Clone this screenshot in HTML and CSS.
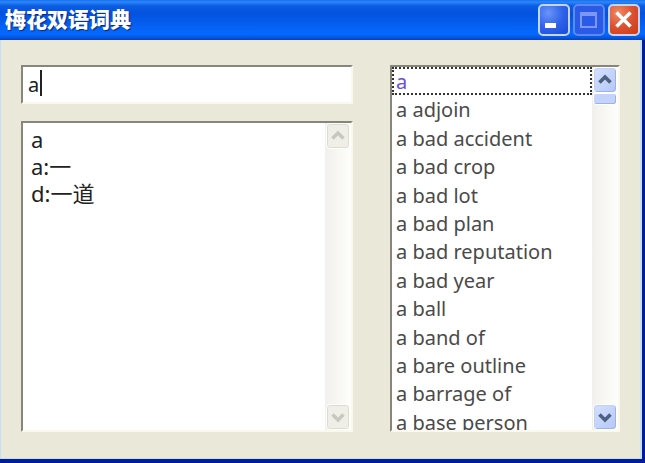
FILE: index.html
```
<!DOCTYPE html>
<html lang="zh-CN">
<head>
    <meta charset="UTF-8">
    <meta name="viewport" content="width=device-width, initial-scale=1.0">
    <title>梅花双语词典</title>
    <link rel="stylesheet" href="styles.css">
</head>
<body>
    <div class="window">
        <header class="title-bar">
            <h1>梅花双语词典</h1>
            <div class="window-buttons">
                <button type="button" class="window-btn" aria-label="Minimize">
                    <svg viewBox="0 0 28 28"><path d="M5 17h11v5H5z" fill="#fff"/></svg>
                </button>
                <button type="button" class="window-btn maximize" aria-label="Maximize" disabled>
                    <svg viewBox="0 0 28 28"><path d="M6 7h15v14H6z" fill="none" stroke="#7c98f4" stroke-width="2"/><path d="M5 6h17v4H5z" fill="#7c98f4"/></svg>
                </button>
                <button type="button" class="window-btn close" aria-label="Close">
                    <svg viewBox="0 0 28 28"><path d="M6.500 6.500l14 14M20.500 6.500l-14 14" stroke="#fff" stroke-width="3.600"/></svg>
                </button>
            </div>
        </header>
        <main class="content">
            <section class="lookup">
                <div class="field search">
                    <input type="text" id="word" value="a" aria-label="Word">
                    <span class="caret"></span>
                </div>
                <div class="field result">
                    <textarea id="meaning" aria-label="Meaning" readonly>a
a:一
d:一道</textarea>
                    <div class="scrollbar disabled">
                        <button type="button" class="scroll-btn" aria-label="Scroll up" disabled>
                            <svg viewBox="0 0 22 24"><path d="M5.500 14.500L11 9l5.500 5.500"/></svg>
                        </button>
                        <button type="button" class="scroll-btn" aria-label="Scroll down" disabled>
                            <svg viewBox="0 0 22 24"><path d="M5.500 9.500L11 15l5.500-5.500"/></svg>
                        </button>
                    </div>
                </div>
            </section>
            <div class="field words">
                <select id="wordList" size="12" aria-label="Word list">
                    <option class="current">a</option>
                    <option>a adjoin</option>
                    <option>a bad accident</option>
                    <option>a bad crop</option>
                    <option>a bad lot</option>
                    <option>a bad plan</option>
                    <option>a bad reputation</option>
                    <option>a bad year</option>
                    <option>a ball</option>
                    <option>a band of</option>
                    <option>a bare outline</option>
                    <option>a barrage of</option>
                    <option>a base person</option>
                </select>
                <div class="scrollbar">
                    <button type="button" class="scroll-btn" aria-label="Scroll up">
                        <svg viewBox="0 0 22 24"><path d="M5.500 14.500L11 9l5.500 5.500"/></svg>
                    </button>
                    <div class="thumb"></div>
                    <button type="button" class="scroll-btn" aria-label="Scroll down">
                        <svg viewBox="0 0 22 24"><path d="M5.500 9.500L11 15l5.500-5.500"/></svg>
                    </button>
                </div>
            </div>
        </main>
    </div>
</body>
</html>
```
FILE: styles.css
```
* {
    box-sizing: border-box;
}
body {
    margin: 0;
    font-family: "Noto Sans", "Noto Sans CJK SC", sans-serif;
    font-size: 20px;
    background-color: #eae8d8;
}
.window {
    display: flex;
    flex-direction: column;
    height: 100vh;
    background-color: #001c9c;
}
.title-bar {
    display: flex;
    align-items: center;
    justify-content: space-between;
    height: 40px;
    padding: 0 5px;
    background: linear-gradient(#1b70ee 0, #2a86fa 2px, #0b5be2 6px, #0353df 14px, #0562f4 27px, #0669ff 34px, #0354dc 38px, #0342bd 40px);
}
.title-bar h1 {
    margin: 0;
    padding-bottom: 4px;
    font-family: "Noto Sans CJK SC", sans-serif;
    font-size: 21px;
    font-weight: 900;
    line-height: 36px;
    color: #fff;
    text-shadow: 1px 1px 1px #06297f;
}
.window-buttons {
    display: flex;
    gap: 3px;
}
.window-btn {
    width: 32px;
    height: 32px;
    padding: 0;
    border: 2px solid #c4d5fb;
    border-radius: 5px;
    background: radial-gradient(circle at 30% 25%, #6a94f6, #2f63ea 50%, #1c48dc);
}
.window-btn svg {
    display: block;
    width: 28px;
    height: 28px;
}
.window-btn.maximize {
    border-color: #5c8af2;
    background: #2a5ae6;
}
.window-btn.close {
    background: radial-gradient(circle at 30% 25%, #f08a66, #dd5030 50%, #c93c14);
}
.content {
    flex: 1;
    display: grid;
    grid-template-columns: 332fr 230fr;
    gap: 37px;
    min-height: 0;
    margin: 0 3px 4px 0;
    padding: 25px 20px 26px;
    border: solid #c4e0f8;
    border-width: 0 2px 1px 1px;
    background-color: #eae8d8;
}
.lookup {
    display: flex;
    flex-direction: column;
    gap: 17px;
    min-width: 0;
    min-height: 0;
}
.field {
    display: flex;
    min-width: 0;
    min-height: 0;
    border: 2px solid;
    border-color: #88867a #fbf9ee #fbf9ee #88867a;
    background-color: #fff;
}
.field input,
.field textarea,
.field select {
    flex: 1;
    min-width: 0;
    margin: 0;
    border: 0;
    outline: 0;
    font: inherit;
    color: #222;
    background: none;
}
.search {
    position: relative;
    height: 39px;
}
.search input {
    padding: 0 5px;
    caret-color: transparent;
}
.caret {
    position: absolute;
    top: 3px;
    left: 17px;
    width: 2px;
    height: 26px;
    background-color: #222;
}
.result {
    flex: 1;
}
.field textarea {
    padding: 3px 8px;
    font-size: 22px;
    line-height: 27px;
    resize: none;
    overflow: hidden;
}
.field select {
    padding: 0;
    overflow: hidden;
    border-radius: 0;
    color: #4a4a4a;
}
.words option {
    min-height: 1.42em;
    padding: 1px 4px 0;
    line-height: 1.37;
}
.words option.current {
    color: #6650e0;
    outline: 2px dotted #333;
    outline-offset: -2px;
}
.scrollbar {
    display: flex;
    flex-direction: column;
    width: 26px;
    padding: 0 1px;
    background: linear-gradient(to right, #f1f0ec, #fefefc);
}
.scroll-btn {
    width: 24px;
    height: 26px;
    padding: 0;
    border: 1px solid #fff;
    border-radius: 4px;
    background: linear-gradient(135deg, #d5e0fd, #b4c8f6);
    box-shadow: inset -1px -1px 0 #9db3e6, inset 1px 1px 0 #c0d0f8;
}
.scroll-btn:last-child {
    margin-top: auto;
}
.scroll-btn svg {
    display: block;
    width: 22px;
    height: 24px;
    fill: none;
    stroke: #4d6185;
    stroke-width: 3.6;
}
.disabled .scroll-btn {
    background: #f0efe7;
    box-shadow: inset 0 0 0 1px #dedcd0;
}
.disabled .scroll-btn svg {
    stroke: #c9c8bf;
}
.thumb {
    height: 12px;
    border: 1px solid #fff;
    border-radius: 3px;
    background-color: #c3d3fb;
    box-shadow: inset -1px -1px 0 #9db3e6;
}
```
